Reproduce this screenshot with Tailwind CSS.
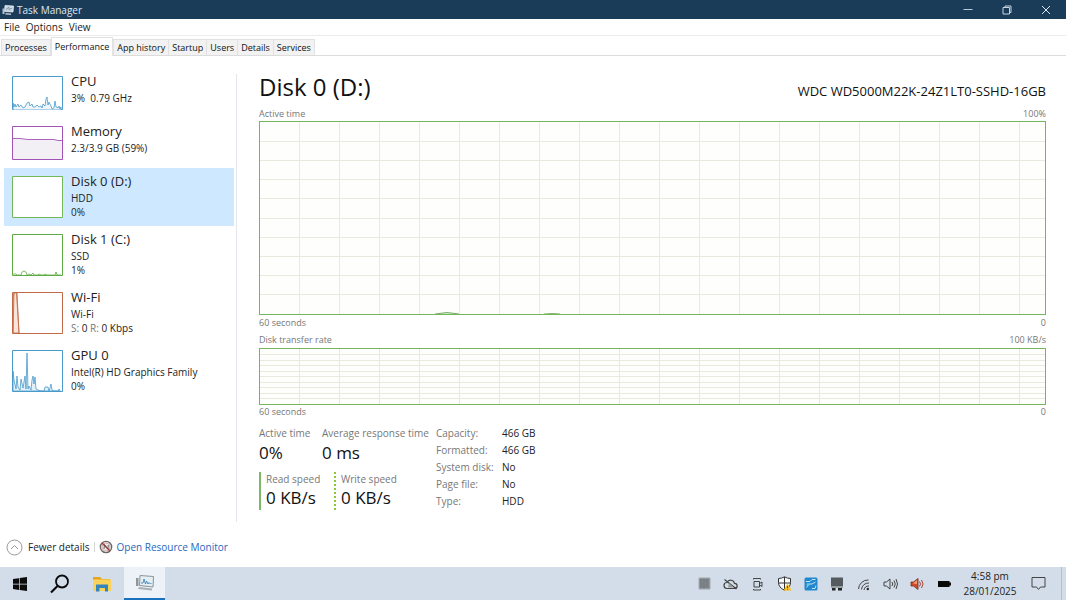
<!DOCTYPE html>
<html lang="en">
<head>
<meta charset="utf-8">
<meta name="viewport" content="width=device-width, initial-scale=1">
<title>Task Manager</title>
<script src="https://cdn.jsdelivr.net/npm/@tailwindcss/browser@4"></script>
</head>
<body class="flex min-h-screen flex-col bg-white font-['Open_Sans','Noto_Sans',sans-serif] text-[10px] leading-[14px] text-[#222]">

<header class="flex h-[19px] items-center bg-[#1b3c59] pl-[2px] text-[#dfe7ee]">
  <svg class="mr-[3px] h-3 w-3" viewBox="0 0 12 12" aria-hidden="true">
    <path d="M3 1.500 11.500 2 11 8 2.500 7.500Z" fill="#c9d6e0" stroke="#f1f5f8" stroke-width=".7"/>
    <path d="M4 5h1.500l1-2 1 3 1-1.500h1.500" fill="none" stroke="#5f88a8" stroke-width=".7"/>
    <path d="M.5 4.500h2v5.500h-2zM4 9l5 .5v1.500L3 10.500z" fill="#b4c4d1"/>
  </svg>
  <h1 class="grow">Task Manager</h1>
  <div class="flex h-full">
    <button aria-label="Minimise" class="flex w-[39px] items-center justify-center"><svg class="h-[10px] w-[10px]" viewBox="0 0 10 10" fill="none" stroke="#b9cbd9"><path d="M.5 4.500h9"/></svg></button>
    <button aria-label="Restore" class="flex w-[39px] items-center justify-center"><svg class="h-[10px] w-[10px]" viewBox="0 0 10 10" fill="none" stroke="#c6d5e0"><path d="M1 2.500h6.500v6.500H1zM3 2.500V1h6v6.500H7.500"/></svg></button>
    <button aria-label="Close" class="flex w-10 items-center justify-center"><svg class="h-[10px] w-[10px]" viewBox="0 0 10 10" fill="none" stroke="#dce6ed"><path d="m1 1 8 8M9 1 1 9"/></svg></button>
  </div>
</header>

<nav class="flex h-[17px] items-center gap-[6px] border-b border-[#ececec] pl-1" aria-label="Menu">
  <button>File</button><button>Options</button><button>View</button>
</nav>

<div class="flex h-5 items-end border-b border-[#dcdcdc] pl-px text-[9px] text-[#111]" role="tablist">
  <button role="tab" class="h-4 border border-b-0 border-[#e2e2e2] bg-[#f2f2f2] px-[3px]">Processes</button>
  <button role="tab" aria-selected="true" class="-mb-px h-[19px] border border-b-0 border-[#e2e2e2] bg-white px-[3px]">Performance</button>
  <button role="tab" class="h-4 border border-b-0 border-[#e2e2e2] bg-[#f2f2f2] px-[3px]">App history</button>
  <button role="tab" class="h-4 border border-b-0 border-l-0 border-[#e2e2e2] bg-[#f2f2f2] px-[3px]">Startup</button>
  <button role="tab" class="h-4 border border-b-0 border-l-0 border-[#e2e2e2] bg-[#f2f2f2] px-[3px]">Users</button>
  <button role="tab" class="h-4 border border-b-0 border-l-0 border-[#e2e2e2] bg-[#f2f2f2] px-[3px]">Details</button>
  <button role="tab" class="h-4 border border-b-0 border-l-0 border-[#e2e2e2] bg-[#f2f2f2] px-[3px]">Services</button>
</div>

<main class="flex grow">
  <aside class="mt-[18px] mb-[5px] flex w-[237px] shrink-0 flex-col border-r border-[#e3e6ea] pr-[2px] pl-1">
    <div class="-mt-[6px] flex flex-col">
    <button class="flex h-[50px] gap-2 px-2 pt-2 text-left">
      <svg class="h-[34px] w-[51px] shrink-0" viewBox="0 0 51 34" fill="#fff" stroke="#4a9acb"><path d="M.5.5h50v33H.5z"/><path fill="#eef6fb" stroke-width=".8" d="m1 27 1 4 1-3 1 3 2-3 1 3 2-2 2 3 2-1 2-4 2-1 1 4 2-2 1 3 2 0 2-2 2 2 2-1 1 2 1-4 2 2 1-7 1-2 1 8 1-3 2 4 1 3 2-1 1-7 1 6 2 1 1-2 1 3 1-2v3H1z"/></svg>
      <span><span class="block text-[13px] leading-[11px]">CPU</span><span class="mt-1 block">3%&nbsp; 0.79 GHz</span></span>
    </button>
    <button class="flex h-[50px] gap-2 px-2 pt-2 text-left">
      <svg class="h-[34px] w-[51px] shrink-0" viewBox="0 0 51 34" fill="#fff" stroke="#a352b5"><path d="M.5.5h50v33H.5z"/><path stroke="none" fill="#f3f0f5" d="M1 12.500h7l8 1h26l4 1h4V33H1z"/><path fill="none" stroke-width=".9" d="M1 12.500h7l8 1h26l4 1h4"/></svg>
      <span><span class="block text-[13px] leading-[11px]">Memory</span><span class="mt-1 block">2.3/3.9 GB (59%)</span></span>
    </button>
    <button class="flex h-[58px] gap-2 bg-[#cde8ff] px-2 pt-2 text-left">
      <svg class="h-[42px] w-[51px] shrink-0" viewBox="0 0 51 42" fill="#fff" stroke="#74b65b"><path d="M.5.5h50v41H.5z"/></svg>
      <span><span class="block text-[13px] leading-[11px]">Disk 0 (D:)</span><span class="mt-1 block">HDD</span><span class="block">0%</span></span>
    </button>
    <button class="flex h-[58px] gap-2 px-2 pt-2 text-left">
      <svg class="h-[42px] w-[51px] shrink-0" viewBox="0 0 51 42" fill="#fff" stroke="#5dab43"><path d="M.5.5h50v41H.5z"/><path fill="none" stroke-width=".8" d="M1 40h3l1 1h4l1-3 2-1 2 1 1 3 2-1 2 1 2-2 1 2h4l1-1 2 1h3l1-1 2 1h8l1-3 1 3h4"/></svg>
      <span><span class="block text-[13px] leading-[11px]">Disk 1 (C:)</span><span class="mt-1 block">SSD</span><span class="block">1%</span></span>
    </button>
    <button class="flex h-[58px] gap-2 px-2 pt-2 text-left">
      <svg class="h-[42px] w-[51px] shrink-0" viewBox="0 0 51 42" fill="#fff" stroke="#c06a48"><path d="M.5.5h50v41H.5z"/><path fill="#f9e5d9" stroke-width=".8" d="M1 41V6l1-5h3l2 40z"/><path fill="none" stroke-width=".8" d="m2 1-1 40M4.500 1l2.500 40"/></svg>
      <span><span class="block text-[13px] leading-[11px]">Wi-Fi</span><span class="mt-1 block">Wi-Fi</span><span class="block"><span class="text-[#777]">S:</span> 0 <span class="text-[#777]">R:</span> 0 Kbps</span></span>
    </button>
    <button class="flex h-[58px] gap-2 px-2 pt-2 text-left">
      <svg class="h-[42px] w-[51px] shrink-0" viewBox="0 0 51 42" fill="#fff" stroke="#4a9acb"><path d="M.5.5h50v41H.5z"/><path fill="#e3f0f8" stroke-width=".8" d="m1 21 1 9 2 9 1-13 1 11 2 3 1-11 2 9 2-12 1 13 1-36 1 36 1-3 2 4 1-10 1-4 1 8 1-7 1 12 2 1 3 1h3l1-4h3l1 4 1-3 1-4 1 6 2 1h4l1-2 1 1v1H1z"/></svg>
      <span><span class="block text-[13px] leading-[11px]">GPU 0</span><span class="mt-1 block">Intel(R) HD Graphics Family</span><span class="block">0%</span></span>
    </button>
    </div>
  </aside>

  <section class="flex grow flex-col pt-[14px] pr-5 pl-[22px] text-[#777]">
    <div class="flex items-end justify-between text-[#111]">
      <h2 class="text-[24px] leading-[34px]">Disk 0 (D:)</h2>
      <p class="text-[13px] leading-[26px]">WDC WD5000M22K-24Z1LT0-SSHD-16GB</p>
    </div>
    <div class="mt-[3px] flex justify-between text-[9px]"><span>Active time</span><span>100%</span></div>
    <svg class="min-h-[194px] w-full grow basis-0 border border-[#74b65b] bg-[#fefffc]" shape-rendering="crispEdges" role="img" aria-label="Active time graph">
      <defs><pattern id="cols" width="40" height="400" patternUnits="userSpaceOnUse"><path d="M39.500 0v400" stroke="#e6ebde"/></pattern></defs>
      <rect width="100%" height="100%" fill="url(#cols)"/>
      <g stroke="#e6ebde"><line x2="100%" y1="10%" y2="10%"/><line x2="100%" y1="20%" y2="20%"/><line x2="100%" y1="30%" y2="30%"/><line x2="100%" y1="40%" y2="40%"/><line x2="100%" y1="50%" y2="50%"/><line x2="100%" y1="60%" y2="60%"/><line x2="100%" y1="70%" y2="70%"/><line x2="100%" y1="80%" y2="80%"/><line x2="100%" y1="90%" y2="90%"/></g>
      <svg y="100%" overflow="visible" shape-rendering="auto" fill="#dcebd2" stroke="#5c9c45" stroke-width=".8"><path d="M175 0q12-3 24 0M284 0q9-1 16 0"/></svg>
    </svg>
    <div class="mt-px flex justify-between text-[9px]"><span>60 seconds</span><span>0</span></div>
    <div class="mt-[3px] flex justify-between text-[9px]"><span>Disk transfer rate</span><span>100 KB/s</span></div>
    <svg class="mt-px h-[57px] w-full border border-[#74b65b] bg-[#fefffc]" shape-rendering="crispEdges" role="img" aria-label="Disk transfer rate graph">
      <rect width="100%" height="100%" fill="url(#cols)"/>
      <g stroke="#e6ebde"><line x2="100%" y1="10%" y2="10%"/><line x2="100%" y1="20%" y2="20%"/><line x2="100%" y1="30%" y2="30%"/><line x2="100%" y1="40%" y2="40%"/><line x2="100%" y1="50%" y2="50%"/><line x2="100%" y1="60%" y2="60%"/><line x2="100%" y1="70%" y2="70%"/><line x2="100%" y1="80%" y2="80%"/><line x2="100%" y1="90%" y2="90%"/></g>
    </svg>
    <div class="flex justify-between text-[9px]"><span>60 seconds</span><span>0</span></div>

    <div class="mt-[7px] mb-[17px] flex gap-[10px]">
      <div class="w-[167px]">
        <dl class="flex">
          <div class="w-[63px] shrink-0"><dt>Active time</dt><dd class="text-[17px] leading-[26px] text-[#111]">0%</dd></div>
          <div class="whitespace-nowrap"><dt>Average response time</dt><dd class="text-[17px] leading-[26px] text-[#111]">0 ms</dd></div>
        </dl>
        <dl class="mt-[6px] flex">
          <div class="w-[75px] border-l-2 border-[#7cb866] pl-[5px]"><dt>Read speed</dt><dd class="text-[17px] leading-6 text-[#111]">0 KB/s</dd></div>
          <div class="border-l-2 border-dotted border-[#8cc63f] pl-[5px]"><dt>Write speed</dt><dd class="text-[17px] leading-6 text-[#111]">0 KB/s</dd></div>
        </dl>
      </div>
      <dl class="grid grid-cols-[66px_auto] content-start gap-y-[3px]">
        <dt>Capacity:</dt><dd class="text-[#222]">466 GB</dd>
        <dt>Formatted:</dt><dd class="text-[#222]">466 GB</dd>
        <dt>System disk:</dt><dd class="text-[#222]">No</dd>
        <dt>Page file:</dt><dd class="text-[#222]">No</dd>
        <dt>Type:</dt><dd class="text-[#222]">HDD</dd>
      </dl>
    </div>
  </section>
</main>

<footer class="flex h-10 items-center pl-[6px]">
  <button class="flex items-center gap-[5px]">
    <svg class="h-[17px] w-[17px]" viewBox="0 0 17 17" fill="none" stroke="#999"><circle cx="8.500" cy="8.500" r="7.500"/><path d="m5 10 3.500-3.500L12 10"/></svg>
    Fewer details
  </button>
  <span class="mx-1 h-[10px] w-px bg-[#d8d8d8]"></span>
  <a href="#" class="flex items-center gap-1 text-[#2a67bd]">
    <svg class="h-[14px] w-[14px]" viewBox="0 0 14 14" fill="none"><circle cx="7" cy="7" r="5.700" fill="#e9e6e6" stroke="#6b6666" stroke-width="1.300"/><circle cx="7" cy="7" r="4" stroke="#c9a3a0" stroke-width=".7"/><path d="m3 3 8 8" stroke="#b3382f" stroke-width="1.300"/><path d="m5 9 .5-4.500L9 9l.3-4" stroke="#5a4a4a" stroke-width=".8"/></svg>
    Open Resource Monitor
  </a>
</footer>

<div class="flex h-[33px] items-stretch justify-between bg-[#d2dde9]" role="toolbar" aria-label="Taskbar">
  <div class="flex">
    <button aria-label="Start" class="flex w-10 items-center justify-center"><svg class="h-[14px] w-[14px]" viewBox="0 0 14 14" fill="#0b0b0b"><path d="M0 2l6-.8v5.500H0zM6.700 1.100 14 0v6.700H6.700zM0 7.400h6v5.500L0 12.100zM6.700 7.400H14V14l-7.300-1z"/></svg></button>
    <button aria-label="Search" class="flex w-10 items-center justify-center"><svg class="h-5 w-5" viewBox="0 0 20 20" fill="none" stroke="#0b0b0b" stroke-width="1.800"><circle cx="12" cy="7.500" r="6"/><path d="m7.500 12-6.500 6.500" stroke-width="2.200"/></svg></button>
    <button aria-label="File Explorer" class="flex w-11 items-center justify-center"><svg class="h-4 w-[18px]" viewBox="0 0 18 16"><path d="M0 1h7l2 2h8v2H0z" fill="#e3a51f"/><path d="M0 3.500h18V15H0z" fill="#fbd35a"/><path d="M3 15.500V8.500h12v7h-3v-3.500H6.500v3.500z" fill="#3286bd"/></svg></button>
    <button aria-label="Task Manager" class="flex w-[41px] items-center justify-center border-b-2 border-[#1a72bf] bg-[#ecf2f8]"><svg class="h-[18px] w-5" viewBox="0 0 20 18" fill="none"><path d="M5 1.500 18.500 2.500 18 13 4.500 11.500z" fill="#e5eef3" stroke="#8a9399"/><path d="M6 9h2l1-4 1.500 5 1-3 1.500 3 1-1.500 1.500 1.500 1-1" stroke="#3c87ba" stroke-width=".9"/><path d="M1 4h2.500v8H1z" fill="#8d9699"/><path d="m4 13 13 1.500v2L3 15z" fill="#a9b1b4"/></svg></button>
  </div>
  <div class="flex items-center text-[#222]">
    <div class="mr-[7px] flex items-center gap-3">
    <svg class="h-[14px] w-[14px]" viewBox="0 0 14 14"><path d="M2 1h11v11H2z" fill="#80868b"/><path d="M2 1h11v11H2z" fill="none" stroke="#a4abb0"/><path d="M4 2v8M7 2v9M10 2v8" stroke="#6a7075" stroke-width=".7"/></svg>
    <svg class="h-[14px] w-[15px]" viewBox="0 0 15 14" fill="none" stroke="#444"><path d="M4 11.500h7.500a2.600 2.600 0 0 0 0-5.200A4 4 0 0 0 4 5.500a3 3 0 0 0 0 6zM1.500 2.500l12 9.500" stroke-width="1.200"/><path d="M5 10.500h6l-5-4.500z" fill="#999" stroke="none"/></svg>
    <svg class="h-[14px] w-[15px]" viewBox="0 0 15 14" fill="none" stroke="#333" stroke-width=".9"><path d="M4 4.500h5.500v5.500H4zM9.500 6.500l2.500-1.500v4.500L9.500 8M3.500 2.500V1.500h7v1M3.500 12v1h7v-1"/></svg>
    <svg class="h-[15px] w-[15px]" viewBox="0 0 15 15"><path d="M7.500.8q3 1.700 6 1.700v4q0 5-6 7.700-6-2.700-6-7.700v-4q3 0 6-1.700z" fill="#f6f8f9" stroke="#333"/><path d="M7.500 1v13M1.500 7h12" stroke="#333"/><path d="m10.500 7.500 4 7h-8z" fill="#f5bd22"/><path d="M10.500 10v2M10.500 12.800v.8" stroke="#4a3800" stroke-width=".8"/></svg>
    <svg class="h-[14px] w-[14px]" viewBox="0 0 14 14" fill="none"><rect x=".5" y=".5" width="13" height="13" rx="1.500" fill="#2387cb"/><path d="M2 4.500h4l2-2h3.500M2.500 10.500 5 7h3l3.500-2M8 11.500h3l1-3" stroke="#bce5f7"/><circle cx="4" cy="7.500" r="1.500" fill="#6dc2e8"/></svg>
    <svg class="h-[14px] w-[14px]" viewBox="0 0 14 14"><path d="M1 .5h12v9H1z" fill="#555a5e"/><path d="M2 11h3.500v2.500H2zM8 11h4v2.500H8z" fill="#222"/><path d="M1 10.300h12" stroke="#8d9397"/></svg>
    <svg class="h-[14px] w-[15px]" viewBox="0 0 14 14" fill="none" stroke="#444"><path d="M2 12A9.500 9.500 0 0 1 12 3M5 12.500a7 7 0 0 1 7.500-6.500M7.500 13a5 5 0 0 1 5-4"/><circle cx="11.300" cy="12" r="1.200" fill="#222" stroke="none"/></svg>
    <svg class="h-[14px] w-[15px]" viewBox="0 0 15 14" fill="none" stroke="#333"><path d="M1 5h2.500L7 2v10L3.500 9H1zM9 5q1.500 2 0 4M11 3.500q2.500 3.500 0 7M13 2q3 5 0 10" stroke-width=".9"/></svg>
    <svg class="h-[14px] w-[15px]" viewBox="0 0 15 14" fill="none"><path d="M1 5h2.500L8 1.500v11L3.500 9H1z" fill="#cf4b2c" stroke="#7e2c1d" stroke-width=".8"/><path d="M3 6.500 7 3v4z" fill="#f39b72"/><path d="M9.500 4.500q2 2.500 0 5M11.500 3q3 4 0 8" stroke="#a14332"/></svg>
    <svg class="h-[14px] w-[15px]" viewBox="0 0 15 14"><path d="M1 4h11.500v1.500H14v3h-1.500V10H1z" fill="#080808"/></svg>
    </div>
    <time class="w-[62px] text-center leading-[15px]" datetime="2025-01-28T16:58">4:58 pm<br>28/01/2025</time>
    <button aria-label="Notifications" class="mr-[6px] flex w-[34px] items-center justify-center"><svg class="h-[15px] w-[15px]" viewBox="0 0 15 15" fill="none" stroke="#444"><path d="M1 1.500h13v9.500H9.500L7.500 13.500 5.500 11H1z"/></svg></button>
    <span class="mr-[4px] h-full w-px bg-[#b4c0cc]"></span>
  </div>
</div>
</body>
</html>
